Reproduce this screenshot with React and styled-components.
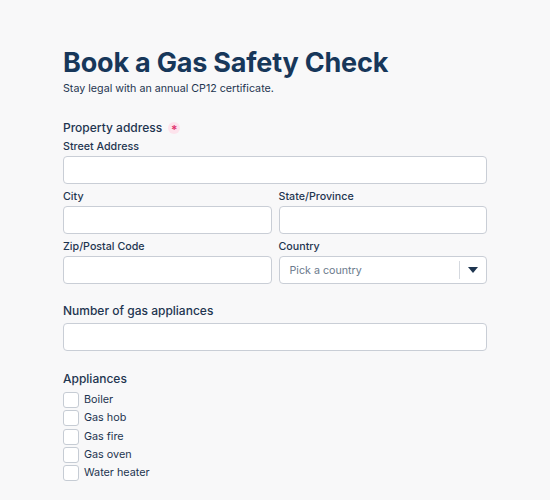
import React from "react";
import styled, { createGlobalStyle } from "styled-components";

const Global = createGlobalStyle`
  html, body { margin: 0; padding: 0; background: #f8f8f9; }
  body { font-family: Inter, "Noto Sans", sans-serif; color: #1b3a5a; }
  * { box-sizing: border-box; }
`;

const Page = styled.div`
  padding: 45px 63px 0 63px;
  width: 550px;
`;

const Title = styled.h1`
  margin: 0;
  font-size: 27px;
  font-weight: 700;
  line-height: 35px;
  color: #17375a;
  letter-spacing: -0.2px;
`;

const Subtitle = styled.p`
  margin: 2px 0 0;
  font-size: 10.7px;
  line-height: 14px;
  color: #1e3550;
`;

const Section = styled.div`
  margin-top: ${(p) => p.$mt}px;
`;

const SectionLabel = styled.div`
  display: flex;
  align-items: center;
  gap: 6px;
  font-size: 12px;
  font-weight: 500;
  line-height: 16px;
  color: #1e3550;
  margin-bottom: ${(p) => p.$mb || 0}px;
`;

const Required = styled.span`
  display: inline-flex;
  align-items: center;
  justify-content: center;
  width: 12px;
  height: 12px;
  border-radius: 50%;
  background: #fde3ec;
  color: #e0336f;
  font-size: 12px;
  font-weight: 600;
  line-height: 1;
  padding-top: 4px;
`;

const Grid = styled.div`
  display: grid;
  grid-template-columns: 1fr 1fr;
  column-gap: 7px;
  row-gap: 6px;
`;

const Field = styled.div`
  grid-column: ${(p) => (p.$full ? "1 / -1" : "auto")};
  display: flex;
  flex-direction: column;
  gap: 3px;
`;

const FieldLabel = styled.label`
  font-size: 10.7px;
  line-height: 13px;
  font-weight: 500;
  color: #1e3550;
`;

const Input = styled.input`
  display: block;
  height: 28px;
  width: 100%;
  border: 1px solid #c9ced6;
  border-radius: 4px;
  background: #fff;
  font: inherit;
  font-size: 11px;
  padding: 0 10px;
  outline: none;
`;

const SelectBox = styled.div`
  height: 28px;
  border: 1px solid #c9ced6;
  border-radius: 4px;
  background: #fff;
  display: flex;
  align-items: center;
`;

const Placeholder = styled.span`
  flex: 1;
  padding-left: 10px;
  font-size: 10.7px;
  color: #6b7a8c;
`;

const Divider = styled.span`
  width: 1px;
  height: 18px;
  background: #d5d9df;
`;

const Caret = styled.span`
  width: 26px;
  display: flex;
  justify-content: center;
  align-items: center;
`;

const CheckList = styled.div`
  display: flex;
  flex-direction: column;
  gap: 2.33px;
`;

const CheckRow = styled.label`
  display: flex;
  align-items: center;
  gap: 5px;
  font-size: 10.8px;
  color: #1e3550;
  line-height: 16px;
`;

const Box = styled.span`
  width: 16px;
  height: 16px;
  border: 1px solid #c6ccd4;
  border-radius: 3px;
  background: #fff;
`;

const appliances = ["Boiler", "Gas hob", "Gas fire", "Gas oven", "Water heater"];

export default function App() {
  return (
    <>
      <Global />
      <Page>
        <Title>Book a Gas Safety Check</Title>
        <Subtitle>Stay legal with an annual CP12 certificate.</Subtitle>

        <Section $mt={24}>
          <SectionLabel $mb={4}>
            Property address <Required>*</Required>
          </SectionLabel>
          <Grid>
            <Field $full>
              <FieldLabel>Street Address</FieldLabel>
              <Input />
            </Field>
            <Field>
              <FieldLabel>City</FieldLabel>
              <Input />
            </Field>
            <Field>
              <FieldLabel>State/Province</FieldLabel>
              <Input />
            </Field>
            <Field>
              <FieldLabel>Zip/Postal Code</FieldLabel>
              <Input />
            </Field>
            <Field>
              <FieldLabel>Country</FieldLabel>
              <SelectBox>
                <Placeholder>Pick a country</Placeholder>
                <Divider />
                <Caret>
                  <svg width="10" height="6" viewBox="0 0 10 6">
                    <path d="M0 0h10L5 6z" fill="#1e3550" />
                  </svg>
                </Caret>
              </SelectBox>
            </Field>
          </Grid>
        </Section>

        <Section $mt={19}>
          <SectionLabel $mb={4}>Number of gas appliances</SectionLabel>
          <Input />
        </Section>

        <Section $mt={20}>
          <SectionLabel $mb={5}>Appliances</SectionLabel>
          <CheckList>
            {appliances.map((a) => (
              <CheckRow key={a}>
                <Box />
                {a}
              </CheckRow>
            ))}
          </CheckList>
        </Section>
      </Page>
    </>
  );
}
